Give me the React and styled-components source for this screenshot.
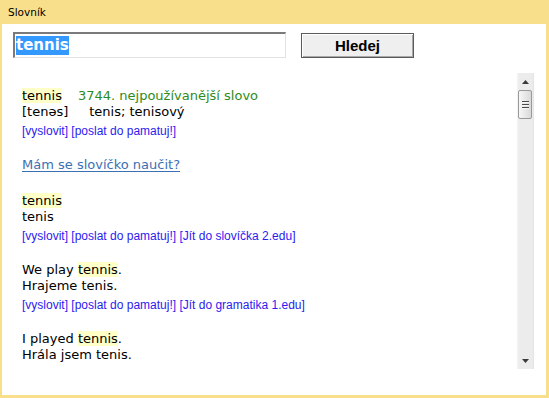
import React from 'react';
import styled, { createGlobalStyle } from 'styled-components';

const Global = createGlobalStyle`
  *, *::before, *::after { box-sizing: border-box; }
  html, body { margin: 0; padding: 0; background: #f8df8b; }
  #root { width: 549px; height: 398px; }
`;

const Window = styled.div`
  width: 549px;
  height: 398px;
  display: flex;
  flex-direction: column;
  background: #f8df8b;
  padding: 0 3px 3px 2px;
`;

const TitleBar = styled.div`
  height: 24px;
  flex: none;
  display: flex;
  align-items: center;
  padding-left: 6px;
  font: 10.5px "DejaVu Sans", sans-serif;
  color: #000;
`;

const Body = styled.div`
  flex: 1;
  min-height: 0;
  background: #fff;
  display: flex;
  flex-direction: column;
  padding: 8px 12px 26px 11px;
`;

const SearchRow = styled.div`
  display: flex;
  align-items: flex-start;
  gap: 15px;
  height: 26px;
  flex: none;
`;

const SearchBox = styled.div`
  width: 273px;
  height: 26px;
  border-style: solid;
  border-width: 2px 1px 1px 2px;
  border-color: #7a7a7a #e2e2e2 #e2e2e2 #7a7a7a;
  padding: 2px 0 0 1px;
  background: #fff;
`;

const Selected = styled.span`
  display: inline-block;
  background: #3399ff;
  color: #fff;
  font: bold 15px/19px "DejaVu Sans", sans-serif;
`;

const SearchButton = styled.button`
  width: 113px;
  height: 25px;
  margin-top: 1px;
  padding: 0;
  border: 1px solid #5a5a5a;
  background: #efefef;
  box-shadow: inset 1px 1px 0 #ffffff, inset -1px -1px 0 #a8a8a8;
  font: bold 15px "Liberation Sans", Arial, sans-serif;
  color: #000;
`;

const Pane = styled.div`
  flex: 1;
  min-height: 0;
  margin-top: 15px;
  display: flex;
`;

const Content = styled.div`
  flex: 1;
  min-width: 0;
  overflow: hidden;
  padding: 15px 0 0 9px;
  font: 13px/16px "DejaVu Sans", sans-serif;
  color: #000;
`;

const Entry = styled.div`
  margin-bottom: 16px;
`;

const Line = styled.div`
  white-space: nowrap;
`;

const Hl = styled.span`
  background: #ffffc8;
`;

const Rank = styled.span`
  color: #2e8b22;
  margin-left: 16px;
`;

const Meaning = styled.span`
  margin-left: 21px;
`;

const Links = styled.div`
  padding-top: 2px;
  font: 12px/19px "Liberation Sans", Arial, sans-serif;
  color: #2b1bf0;
  white-space: nowrap;
`;

const Ask = styled.a`
  display: block;
  color: #3c70b4;
  text-decoration: underline;
  text-underline-offset: 2px;
  margin-bottom: 20px;
`;

const ScrollBar = styled.div`
  width: 17px;
  flex: none;
  display: flex;
  flex-direction: column;
  background: linear-gradient(to right, #f6f6f6 0, #ececec 2px, #ececec 15px, #e4e4e4 100%);
`;

const ArrowBtn = styled.div`
  height: 17px;
  flex: none;
  display: flex;
  align-items: center;
  justify-content: center;
`;

const Thumb = styled.div`
  height: 29px;
  flex: none;
  margin: 0 2px 0 1px;
  border: 1px solid #999;
  border-radius: 2px;
  background: linear-gradient(to right, #f7f7f7, #e8e8e8 50%, #d9d9d9);
  display: flex;
  flex-direction: column;
  align-items: center;
  justify-content: center;
  gap: 1px;
`;

const Grip = styled.span`
  width: 7px;
  height: 1px;
  background: #4a4a4a;
  box-shadow: 0 1px 0 #f5f5f5;
  margin-bottom: 1px;
`;

const Track = styled.div`
  flex: 1;
`;

const Arrow = ({ down }) => (
  <svg width="7" height="4" viewBox="0 0 7 4">
    <polygon
      points={down ? '0,0 7,0 3.5,4' : '0,4 7,4 3.5,0'}
      fill="#3a3a3a"
    />
  </svg>
);

const LinkRow = ({ extra }) => (
  <Links>
    [vyslovit] [poslat do pamatuj!]{extra ? ` [${extra}]` : ''}
  </Links>
);

export default function App() {
  return (
    <>
      <Global />
      <Window>
        <TitleBar>Slovník</TitleBar>
        <Body>
          <SearchRow>
            <SearchBox role="textbox">
              <Selected>tennis</Selected>
            </SearchBox>
            <SearchButton>Hledej</SearchButton>
          </SearchRow>
          <Pane>
            <Content>
              <Entry>
                <Line>
                  <Hl>tennis</Hl>
                  <Rank>3744. nejpoužívanější slovo</Rank>
                </Line>
                <Line>
                  [tenəs]<Meaning>tenis; tenisový</Meaning>
                </Line>
                <LinkRow />
              </Entry>
              <Ask href="#">Mám se slovíčko naučit?</Ask>
              <Entry>
                <Line><Hl>tennis</Hl></Line>
                <Line>tenis</Line>
                <LinkRow extra="Jít do slovíčka 2.edu" />
              </Entry>
              <Entry>
                <Line>We play <Hl>tennis</Hl>.</Line>
                <Line>Hrajeme tenis.</Line>
                <LinkRow extra="Jít do gramatika 1.edu" />
              </Entry>
              <Entry>
                <Line>I played <Hl>tennis</Hl>.</Line>
                <Line>Hrála jsem tenis.</Line>
                <LinkRow extra="Jít do gramatika 1.edu" />
              </Entry>
            </Content>
            <ScrollBar>
              <ArrowBtn><Arrow /></ArrowBtn>
              <Thumb>
                <Grip />
                <Grip />
                <Grip />
              </Thumb>
              <Track />
              <ArrowBtn><Arrow down /></ArrowBtn>
            </ScrollBar>
          </Pane>
        </Body>
      </Window>
    </>
  );
}
